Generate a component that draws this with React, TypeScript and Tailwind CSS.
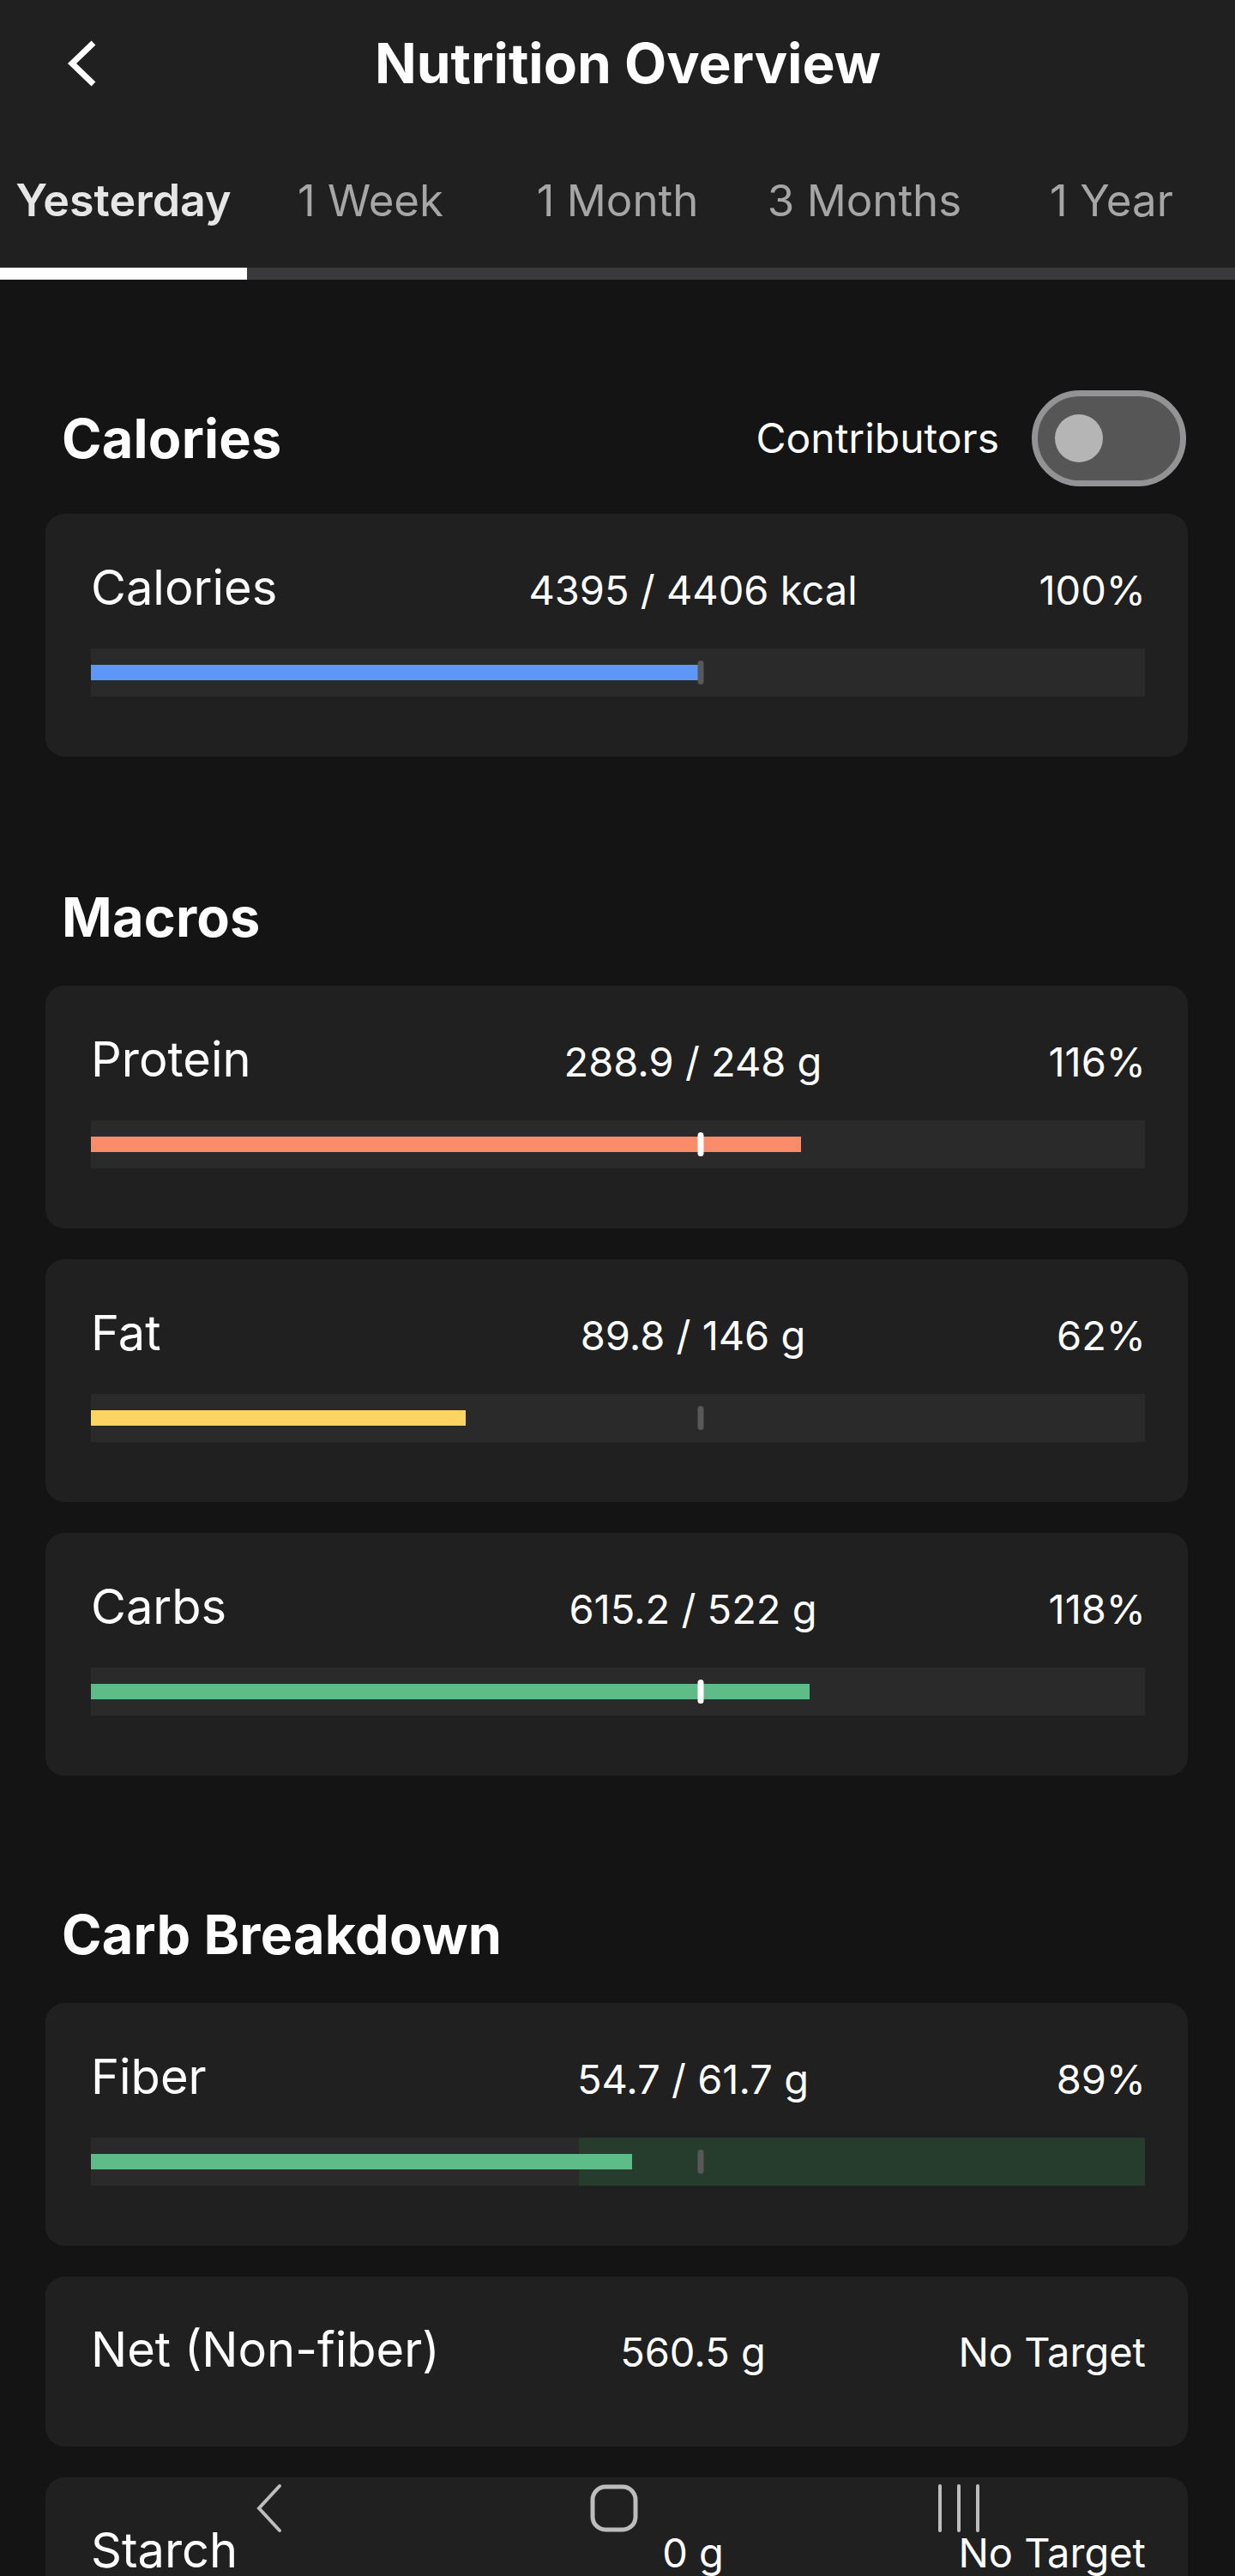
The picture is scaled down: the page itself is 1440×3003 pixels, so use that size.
import React from 'react'

// where 100% of the target sits on the bar track
const TARGET_POS = 0.5785

interface Row {
  label: string
  value: string
  pct: string
  ratio?: number
  fill?: string
  zoneFrom?: number
}

const macros: Row[] = [
  { label: 'Protein', value: '288.9 / 248 g', pct: '116%', ratio: 1.165, fill: 'bg-[#fb8c6b]' },
  { label: 'Fat', value: '89.8 / 146 g', pct: '62%', ratio: 0.615, fill: 'bg-[#fcd462]' },
  { label: 'Carbs', value: '615.2 / 522 g', pct: '118%', ratio: 1.178, fill: 'bg-[#5ebc88]' },
]

const tabs = ['Yesterday', '1 Week', '1 Month', '3 Months', '1 Year']

function Bar({ ratio, fill, zoneFrom }: { ratio: number; fill: string; zoneFrom?: number }) {
  const width = Math.min(ratio * TARGET_POS, 1) * 100
  const passed = ratio > 1
  return (
    <div className="relative mt-[43px] h-[56px] bg-[#2a2a2a]">
      {zoneFrom !== undefined && (
        <div
          className="absolute inset-y-0 right-0 bg-[#263d2e]"
          style={{ left: `${zoneFrom * TARGET_POS * 100}%` }}
        />
      )}
      <div
        className={`absolute left-0 top-[19px] h-[18px] ${fill}`}
        style={{ width: `${width}%` }}
      />
      <div
        className={`absolute top-[14px] h-[28px] w-[7px] -translate-x-1/2 rounded-full ${passed ? 'bg-white' : 'bg-[#585858]'}`}
        style={{ left: `${TARGET_POS * 100}%` }}
      />
    </div>
  )
}

function StatRow({ label, value, pct }: { label: string; value: string; pct: string }) {
  return (
    <div className="flex h-[56px] items-baseline text-white">
      <span className="flex-1 text-[56px] leading-[56px]">{label}</span>
      <span className="w-[400px] text-center text-[47px] leading-[56px]">{value}</span>
      <span className="-mr-[1px] w-[328px] text-right text-[47px] leading-[56px]">{pct}</span>
    </div>
  )
}

function Card({ row }: { row: Row }) {
  return (
    <div className="rounded-[22px] bg-[#202020] pb-[70px] pl-[53px] pr-[50px] pt-[58px]">
      <StatRow label={row.label} value={row.value} pct={row.pct} />
      {row.ratio !== undefined && row.fill && (
        <Bar ratio={row.ratio} fill={row.fill} zoneFrom={row.zoneFrom} />
      )}
    </div>
  )
}

function PlainCard({ label, value, pct }: { label: string; value: string; pct: string }) {
  return (
    <div className="rounded-[22px] bg-[#202020] pb-[85px] pl-[53px] pr-[50px] pt-[57px]">
      <StatRow label={label} value={value} pct={pct} />
    </div>
  )
}

function SectionTitle({ children }: { children: React.ReactNode }) {
  return (
    <h2 className="pl-[19px] text-[63px] font-bold leading-[62px] tracking-[0.2px] text-white">
      {children}
    </h2>
  )
}

export default function App() {
  return (
    <div
      className="relative h-[3003px] overflow-hidden bg-[#141414]"
      style={{ fontFamily: 'Inter, "Noto Sans", sans-serif' }}
    >
      {/* Header */}
      <div className="bg-[#202020]">
        <div className="flex h-[147px] items-center">
          <div className="w-[150px] pl-[74px]">
            <svg width="40" height="56" viewBox="0 0 40 56" fill="none">
              <path d="M35 4 L10 28 L35 52" stroke="white" strokeWidth="7" strokeLinecap="butt" strokeLinejoin="miter" />
            </svg>
          </div>
          <h1 className="flex-1 text-center text-[64px] font-bold leading-[64px] text-white">
            Nutrition Overview
          </h1>
          <div className="w-[126px]" />
        </div>
        <div className="flex h-[165px] items-start pt-[61px]">
          {tabs.map((t, i) => (
            <div
              key={t}
              className={
                i === 0
                  ? 'flex-1 text-center text-[52px] font-semibold leading-[51px] text-[#e6e6e6]'
                  : 'flex-1 text-center text-[51px] leading-[51px] text-[#a6a6a6]'
              }
            >
              {t}
            </div>
          ))}
        </div>
        <div className="flex h-[14px] bg-[#3a3a3c]">
          <div className="w-1/5 bg-white" />
        </div>
      </div>

      <div className="pl-[53px] pr-[55px]">
        {/* Calories */}
        <div className="mt-[129px] flex h-[112px] items-center justify-between pr-[2px]">
          <SectionTitle>Calories</SectionTitle>
          <div className="flex items-center gap-[38px]">
            <span className="text-[48px] text-white">Contributors</span>
            <div className="flex h-[112px] w-[180px] items-center rounded-full border-[7px] border-[#939396] bg-[#565656] pl-[20px]">
              <div className="h-[56px] w-[56px] rounded-full bg-[#b5b5b5]" />
            </div>
          </div>
        </div>
        <div className="mt-[32px]">
          <Card row={{ label: 'Calories', value: '4395 / 4406 kcal', pct: '100%', ratio: 0.9975, fill: 'bg-[#5e97f6]' }} />
        </div>

        {/* Macros */}
        <div className="mt-[156px]">
          <SectionTitle>Macros</SectionTitle>
        </div>
        <div className="mt-[49px] flex flex-col gap-[36px]">
          {macros.map((m) => (
            <Card key={m.label} row={m} />
          ))}
        </div>

        {/* Carb breakdown */}
        <div className="mt-[154px]">
          <SectionTitle>Carb Breakdown</SectionTitle>
        </div>
        <div className="mt-[49px] flex flex-col gap-[36px]">
          <Card row={{ label: 'Fiber', value: '54.7 / 61.7 g', pct: '89%', ratio: 0.887, fill: 'bg-[#5ebc88]', zoneFrom: 0.8 }} />
          <PlainCard label="Net (Non-fiber)" value="560.5 g" pct="No Target" />
          <PlainCard label="Starch" value="0 g" pct="No Target" />
        </div>
      </div>

      {/* system navigation bar */}
      <div className="absolute left-0 right-0 top-[2896px] flex h-[56px] items-center">
        <div className="ml-[296px]">
          <svg width="34" height="58" viewBox="0 0 34 58" fill="none">
            <path d="M30 3 L6 29 L30 55" stroke="#bdbdbd" strokeWidth="4" strokeLinecap="round" />
          </svg>
        </div>
        <div className="ml-[358px]">
          <svg width="56" height="56" viewBox="0 0 56 56" fill="none">
            <rect x="3" y="3" width="50" height="50" rx="15" stroke="#bdbdbd" strokeWidth="5" />
          </svg>
        </div>
        <div className="ml-[349px]">
          <svg width="50" height="56" viewBox="0 0 50 56" fill="none">
            <path d="M3 2 V54 M25 2 V54 M47 2 V54" stroke="#bdbdbd" strokeWidth="4" strokeLinecap="round" />
          </svg>
        </div>
      </div>
    </div>
  )
}
